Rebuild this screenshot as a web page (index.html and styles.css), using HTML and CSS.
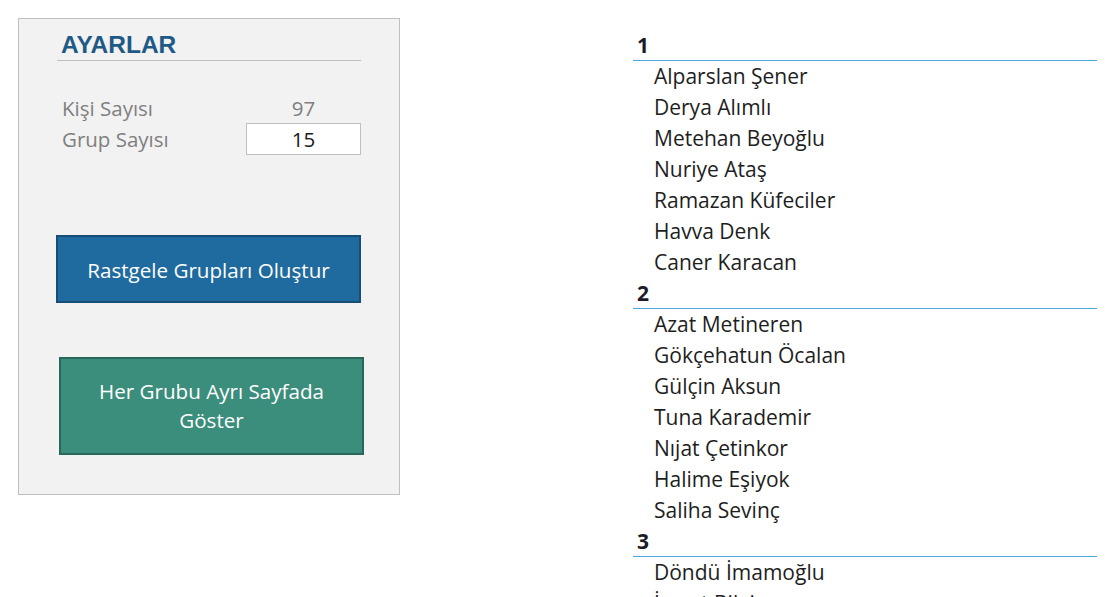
FILE: index.html
```html
<!DOCTYPE html>
<html lang="tr">
<head>
<meta charset="utf-8">
<title>Rastgele Gruplar</title>
<link rel="stylesheet" href="styles.css">
</head>
<body>
<div class="page">
  <div class="panel">
    <div class="title">AYARLAR</div>
    <div class="settings">
      <div class="label">Kişi Sayısı</div>
      <div class="value">97</div>
      <div class="label">Grup Sayısı</div>
      <div class="value input">15</div>
    </div>
    <div class="btn btn-blue">Rastgele Grupları Oluştur</div>
    <div class="btn btn-green">Her Grubu Ayrı Sayfada<br>Göster</div>
  </div>
  <div class="list">
    <div class="group-head">1</div>
    <div class="name">Alparslan Şener</div>
    <div class="name">Derya Alımlı</div>
    <div class="name">Metehan Beyoğlu</div>
    <div class="name">Nuriye Ataş</div>
    <div class="name">Ramazan Küfeciler</div>
    <div class="name">Havva Denk</div>
    <div class="name">Caner Karacan</div>
    <div class="group-head">2</div>
    <div class="name">Azat Metineren</div>
    <div class="name">Gökçehatun Öcalan</div>
    <div class="name">Gülçin Aksun</div>
    <div class="name">Tuna Karademir</div>
    <div class="name">Nıjat Çetinkor</div>
    <div class="name">Halime Eşiyok</div>
    <div class="name">Saliha Sevinç</div>
    <div class="group-head">3</div>
    <div class="name">Döndü İmamoğlu</div>
    <div class="name">İsmet Bilgin</div>
  </div>
</div>
</body>
</html>
```

FILE: styles.css
```css
html, body {
  margin: 0;
  padding: 0;
  background: #ffffff;
  overflow: hidden;
}
body {
  font-family: "Open Sans", "Liberation Sans", sans-serif;
  width: 1117px;
  height: 597px;
}
.page {
  display: flex;
  align-items: flex-start;
}
.panel {
  box-sizing: border-box;
  margin: 18px 0 0 18px;
  width: 382px;
  height: 477px;
  border: 1px solid #bfbfbf;
  background: #f2f2f2;
  padding: 0 38px 0 38px;
  display: flex;
  flex-direction: column;
}
.title {
  margin-top: 12px;
  padding: 0 0 1px 4px;
  font-family: "Liberation Sans", Arial, sans-serif;
  font-weight: bold;
  font-size: 24.5px;
  line-height: 28px;
  color: #1f5a87;
  border-bottom: 1px solid #bfbfbf;
}
.settings {
  margin-top: 31px;
  display: grid;
  grid-template-columns: 189px 115px;
  grid-auto-rows: 31px;
  width: 304px;
}
.label {
  padding-left: 5px;
  font-size: 20.5px;
  line-height: 33px;
  color: #7f7f7f;
}
.value {
  text-align: center;
  font-size: 20.5px;
  line-height: 33px;
  color: #7f7f7f;
}
.value.input {
  box-sizing: border-box;
  background: #ffffff;
  border: 1px solid #bfbfbf;
  color: #1a1a1a;
  line-height: 30px;
  height: 32px;
}
.btn {
  box-sizing: border-box;
  width: 305px;
  display: flex;
  align-items: center;
  justify-content: center;
  text-align: center;
  color: #ffffff;
  font-size: 20.6px;
  line-height: 29px;
}
.btn-blue {
  margin: 81px 0 0 -1px;
  height: 68px;
  padding-top: 2px;
  background: #1f6a9e;
  border: 2px solid #154e77;
}
.btn-green {
  margin: 54px 0 0 2px;
  height: 98px;
  background: #3b8d7c;
  border: 2px solid #28675a;
}
.list {
  margin: 30px 0 0 233px;
  width: 464px;
  display: flex;
  flex-direction: column;
}
.group-head {
  box-sizing: border-box;
  height: 31px;
  padding: 0 0 0 4px;
  border-bottom: 1px solid #4ea6dc;
  font-weight: bold;
  font-size: 21px;
  line-height: 30px;
  color: #1c1c28;
}
.name {
  height: 31px;
  padding-left: 21px;
  font-size: 21px;
  line-height: 31px;
  color: #1e1e1e;
}
```
